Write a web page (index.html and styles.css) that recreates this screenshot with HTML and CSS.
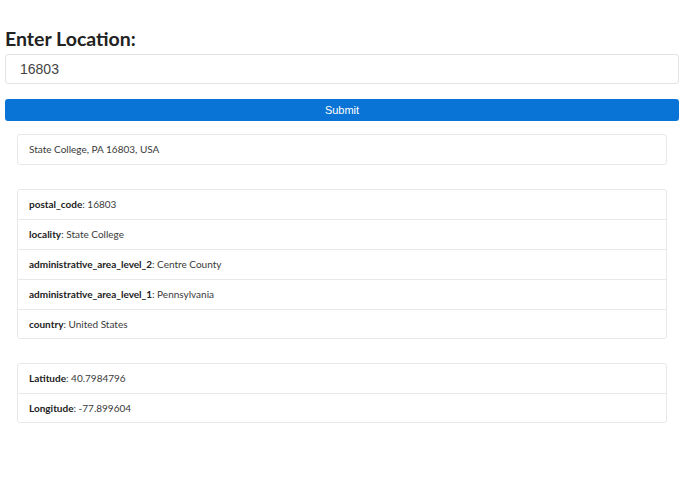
FILE: index.html
```html
<!DOCTYPE html>
<html lang="en">
<head>
    <meta charset="UTF-8">
    <meta name="viewport" content="width=device-width, initial-scale=1.0">
    <title>Location Lookup</title>
    <link rel="stylesheet" href="styles.css">
</head>
<body>
    <div class="page">
        <h1>Enter Location:</h1>
        <input type="text" id="location" value="16803">
        <button>Submit</button>

        <div class="results">
            <ul class="list-group">
                <li>State College, PA 16803, USA</li>
            </ul>

            <ul class="list-group">
                <li><b>postal_code</b>: 16803</li>
                <li><b>locality</b>: State College</li>
                <li><b>administrative_area_level_2</b>: Centre County</li>
                <li><b>administrative_area_level_1</b>: Pennsylvania</li>
                <li><b>country</b>: United States</li>
            </ul>

            <ul class="list-group">
                <li><b>Latitude</b>: 40.7984796</li>
                <li><b>Longitude</b>: -77.899604</li>
            </ul>
        </div>
    </div>
</body>
</html>
```

FILE: styles.css
```css
body {
    margin: 0;
    font-family: 'Lato', 'Open Sans', sans-serif;
    color: #333;
    background: #fff;
}
.page {
    padding: 27px 16px 0 5px;
}
h1 {
    margin: 0 0 3px;
    font-size: 19.5px;
    font-weight: 700;
    color: #222;
    line-height: 24px;
}
input[type="text"] {
    display: block;
    box-sizing: border-box;
    width: 100%;
    height: 30px;
    padding: 0 14px;
    border: 1px solid #e3e3e3;
    border-radius: 3px;
    font-family: 'Liberation Sans', Arial, sans-serif;
    font-size: 14px;
    color: #444;
}
button {
    display: block;
    width: 100%;
    height: 22px;
    margin-top: 15px;
    background-color: #0a74d6;
    color: #fff;
    border: none;
    border-radius: 3px;
    font-family: 'Liberation Sans', Arial, sans-serif;
    font-size: 11px;
    cursor: pointer;
}
.results {
    margin: 13px 12px 0 12px;
}
.list-group {
    list-style: none;
    margin: 0 0 24px;
    padding: 0;
    border: 1px solid #e8e8e8;
    border-radius: 3px;
}
.list-group li {
    height: 29px;
    line-height: 29px;
    padding: 0 11px;
    font-size: 10px;
    color: #3a3a3a;
    border-top: 1px solid #e8e8e8;
}
.list-group li:first-child {
    border-top: none;
}
.list-group li:last-child:not(:first-child) {
    height: 28px;
    line-height: 28px;
}
.list-group b {
    font-weight: 700;
    color: #222;
}
```
